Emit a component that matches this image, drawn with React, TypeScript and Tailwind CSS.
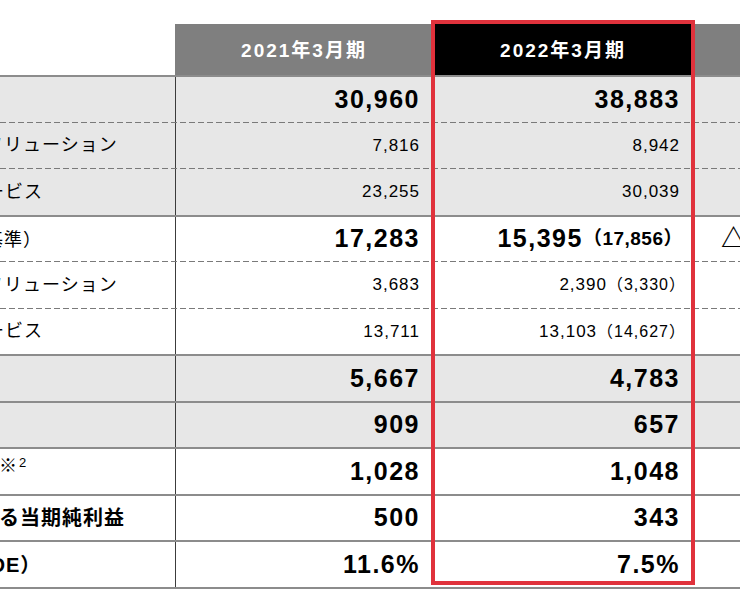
import React from 'react';

type Row = {
  h: string;
  line: 'solid' | 'dashed';
  gray: boolean;
  label: React.ReactNode;
  a: string;
  b: string;
  note?: string;
  c?: string;
  big?: boolean;
};

const sub = (text: string, ml: string) => (
  <span className={`whitespace-nowrap text-[18px] tracking-[1px] ${ml}`}>{text}</span>
);

const main = (text: string, ml: string) => (
  <span className={`whitespace-nowrap text-[20px] font-bold tracking-[1px] ${ml}`}>{text}</span>
);

const rows: Row[] = [
  { h: 'h-[47px]', line: 'solid', gray: true, label: main('売上高', '-ml-[120px]'), a: '30,960', b: '38,883', big: true },
  { h: 'h-[46px]', line: 'dashed', gray: true, label: sub('ＩＴソリューション', '-ml-[53px]'), a: '7,816', b: '8,942' },
  { h: 'h-[47px]', line: 'dashed', gray: true, label: sub('ＩＴサービス', '-ml-[71px]'), a: '23,255', b: '30,039' },
  {
    h: 'h-[46px]',
    line: 'solid',
    gray: false,
    label: (
      <span className="whitespace-nowrap -ml-[234px]">
        <span className="text-[20px] font-bold tracking-[1px]">売上総利益</span>
        <span className="text-[18px] tracking-[1px]">（新収益認識基準）</span>
      </span>
    ),
    a: '17,283',
    b: '15,395',
    note: '（17,856）',
    c: '△1,888',
    big: true,
  },
  { h: 'h-[47px]', line: 'dashed', gray: false, label: sub('ＩＴソリューション', '-ml-[53px]'), a: '3,683', b: '2,390', note: '（3,330）' },
  { h: 'h-[46px]', line: 'dashed', gray: false, label: sub('ＩＴサービス', '-ml-[71px]'), a: '13,711', b: '13,103', note: '（14,627）' },
  { h: 'h-[47px]', line: 'solid', gray: true, label: main('営業利益', '-ml-[140px]'), a: '5,667', b: '4,783', big: true },
  { h: 'h-[46px]', line: 'solid', gray: true, label: main('経常利益', '-ml-[140px]'), a: '909', b: '657', big: true },
  {
    h: 'h-[47px]',
    line: 'solid',
    gray: false,
    label: (
      <span className="whitespace-nowrap -ml-[127px] mb-[8px] flex items-start">
        <span className="text-[20px] font-bold tracking-[1px]">のれん償却額</span>
        <span className="text-[18px] font-bold">※</span>
        <span className="text-[13px] ml-[2px]">2</span>
      </span>
    ),
    a: '1,028',
    b: '1,048',
    big: true,
  },
  { h: 'h-[46px]', line: 'solid', gray: false, label: main('親会社株主に帰属する当期純利益', '-ml-[190px]'), a: '500', b: '343', big: true },
  { h: 'h-[47px]', line: 'solid', gray: false, label: main('自己資本利益率（ROE）', '-ml-[194px]'), a: '11.6%', b: '7.5%', big: true },
];

const SolidLine = () => <div className="h-[2px] shrink-0 bg-[#8c8c8c]" />;
const DashedLine = () => (
  <div className="h-px shrink-0 bg-[repeating-linear-gradient(to_right,#7a7a7a_0_6px,transparent_6px_9px)]" />
);

function Value({ value, note, big }: { value: string; note?: string; big?: boolean }) {
  if (big) {
    return (
      <span className="whitespace-nowrap flex items-center">
        <span className="text-[25px] font-bold tracking-[1.5px]">{value}</span>
        {note && <span className="text-[19px] font-bold tracking-[0.5px] -mr-[3px]">{note}</span>}
      </span>
    );
  }
  return (
    <span className="whitespace-nowrap flex items-center">
      <span className="text-[17px] tracking-[1px]">{value}</span>
      {note && <span className="text-[16px] tracking-[1px] -mr-[6px]">{note}</span>}
    </span>
  );
}

export default function App() {
  return (
    <div className="relative w-[740px] h-[600px] overflow-hidden bg-white pt-[24px] text-black font-['Liberation_Sans','Noto_Sans_CJK_JP',sans-serif]">
      <div className="flex h-[51px] text-[19px] font-bold text-white tracking-[2px]">
        <div className="w-[175px] shrink-0" />
        <div className="w-[258px] shrink-0 bg-[#7f7f7f] flex items-center justify-center pt-[4px]">2021年3月期</div>
        <div className="w-[260px] shrink-0 bg-black flex items-center justify-center pt-[4px]">2022年3月期</div>
        <div className="flex-1 bg-[#7f7f7f]" />
      </div>

      {rows.map((r, i) => (
        <div key={i} className={`${r.h} flex flex-col ${r.gray ? 'bg-[#e7e7e7]' : 'bg-white'}`}>
          {r.line === 'solid' ? <SolidLine /> : <DashedLine />}
          <div className="flex flex-1 min-h-0">
            <div className="w-[175px] shrink-0 overflow-hidden flex items-center">{r.label}</div>
            <div className="w-[258px] shrink-0 border-l border-[#3c3c3c] flex items-center justify-end pr-[13px]">
              <Value value={r.a} big={r.big} />
            </div>
            <div className="w-[260px] shrink-0 flex items-center justify-end pr-[13px]">
              <Value value={r.b} note={r.note} big={r.big} />
            </div>
            <div className="flex-1 min-w-0 overflow-hidden flex items-center pl-[28px]">
              {r.c && <span className="whitespace-nowrap text-[25px] font-bold">{r.c}</span>}
            </div>
          </div>
        </div>
      ))}
      <SolidLine />

      <div className="absolute left-[431px] top-[20px] w-[264px] h-[565px] border-4 border-[#e0323c] pointer-events-none" />
    </div>
  );
}
